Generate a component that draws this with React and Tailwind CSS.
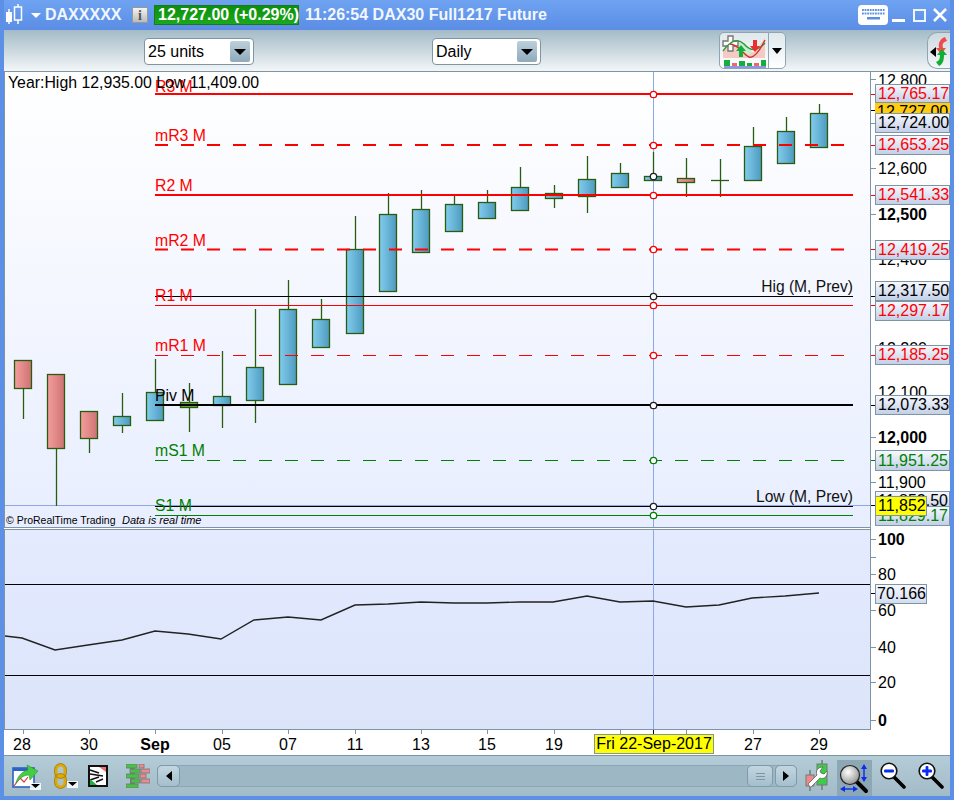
import React from "react";

// [x, bodyTop, bodyBottom, wickTop, wickBottom, colour]
const candles = [
  [23, 360, 388, 360, 419, "r"],
  [56, 374, 448, 374, 506, "r"],
  [89, 411, 438, 411, 453, "r"],
  [122, 416, 425, 393, 433, "b"],
  [155, 392, 420, 359, 420, "b"],
  [189, 402, 407, 383, 432, "g"],
  [222, 396, 405, 351, 428, "b"],
  [255, 367, 400, 309, 423, "b"],
  [288, 309, 384, 280, 384, "b"],
  [321, 319, 347, 299, 347, "b"],
  [355, 249, 333, 216, 333, "b"],
  [388, 214, 291, 193, 291, "b"],
  [421, 209, 252, 190, 252, "b"],
  [454, 204, 231, 196, 231, "b"],
  [487, 202, 218, 190, 218, "b"],
  [520, 187, 210, 167, 210, "b"],
  [554, 193, 198, 185, 208, "b"],
  [587, 179, 196, 156, 213, "b"],
  [620, 173, 187, 163, 187, "b"],
  [653, 176, 180, 152, 180, "b"],
  [686, 178, 182, 158, 197, "r"],
  [720, 180, 180, 159, 197, "d"],
  [753, 146, 180, 127, 180, "b"],
  [786, 131, 163, 117, 163, "b"],
  [819, 113, 147, 104, 147, "b"],
];

const levels = [
  { label: "R3 M", y: 94, color: "#ff0000", w: 2, labelY: 92 },
  { label: "mR3 M", y: 145, color: "#ff0000", w: 2, dash: true, labelY: 141 },
  { label: "R2 M", y: 195, color: "#ff0000", w: 2, labelY: 191 },
  { label: "mR2 M", y: 249.5, color: "#ff0000", w: 2, dash: true, labelY: 246 },
  { label: "R1 M", y: 305.5, color: "#ff0000", w: 1, labelY: 301 },
  { label: "mR1 M", y: 355.5, color: "#ff0000", w: 1, dash: true, labelY: 351 },
  { label: "Piv M", y: 405, color: "#000000", w: 2, labelY: 401 },
  { label: "mS1 M", y: 460.5, color: "#008000", w: 1, dash: true, labelY: 456 },
  { label: "S1 M", y: 515.5, color: "#008000", w: 1, labelY: 511 },
];

const dots = [
  [94, "#ff0000"],
  [145, "#ff0000"],
  [176, "#222222"],
  [195, "#ff0000"],
  [249, "#ff0000"],
  [296, "#222222"],
  [305, "#ff0000"],
  [355, "#ff0000"],
  [405, "#222222"],
  [460, "#008000"],
  [506, "#222222"],
  [515, "#008000"],
];

const oscillator =
  "5,636 22,638 55,650 88,645 122,640 155,631 188,634 221,639 254,620 288,617 321,620 355,605 388,604 421,602 454,603 487,603 520,602 553,602 587,596 620,602 653,601 686,607 719,605 752,598 785,596 819,593";

// axis text, y is the page centre of the label
const axisTicks = [
  { t: "12,800", y: 81 },
  { t: "12,600", y: 169 },
  { t: "12,500", y: 215, bold: true },
  { t: "12,400", y: 260 },
  { t: "12,200", y: 349 },
  { t: "12,100", y: 393 },
  { t: "12,000", y: 438, bold: true },
  { t: "11,900", y: 483 },
  { t: "100", y: 540, bold: true },
  { t: "80", y: 575 },
  { t: "60", y: 611 },
  { t: "40", y: 648 },
  { t: "20", y: 683 },
  { t: "0", y: 721, bold: true },
];

const tickMarks = [
  [79, "#7d95a5"], [94, "#ff0000"], [110, "#000000"], [123, "#7d95a5"], [145, "#ff0000"], [168, "#7d95a5"],
  [195, "#ff0000"], [214, "#7d95a5"], [249, "#ff0000"], [259, "#7d95a5"], [296, "#000000"], [305, "#ff0000"],
  [355, "#ff0000"], [405, "#000000"], [437, "#7d95a5"], [460, "#008000"], [482, "#7d95a5"], [505, "#000000"],
  [539, "#7d95a5"], [557, "#7d95a5"], [574, "#7d95a5"], [593, "#000000"], [610, "#7d95a5"], [647, "#7d95a5"],
  [682, "#7d95a5"], [720, "#7d95a5"],
];

const axisBoxes = [
  { t: "12,727.00", top: 102, h: 19, color: "text-black", bg: "bg-[#ffcc11]", border: false },
  { t: "12,765.17", top: 84, h: 19, color: "text-[#ff0000]" },
  { t: "12,724.00", top: 113, h: 20, color: "text-black" },
  { t: "12,653.25", top: 135, h: 20, color: "text-[#ff0000]" },
  { t: "12,541.33", top: 185, h: 20, color: "text-[#ff0000]" },
  { t: "12,419.25", top: 240, h: 20, color: "text-[#ff0000]" },
  { t: "12,317.50", top: 281, h: 20, color: "text-black" },
  { t: "12,297.17", top: 301, h: 20, color: "text-[#ff0000]" },
  { t: "12,185.25", top: 345, h: 20, color: "text-[#ff0000]" },
  { t: "12,073.33", top: 395, h: 20, color: "text-black" },
  { t: "11,951.25", top: 450, h: 21, color: "text-[#008000]" },
  { t: "11,852.50", top: 491, h: 20, color: "text-black" },
  { t: "11,829.17", top: 506, h: 20, color: "text-[#008000]" },
];

const dateLabels = [
  ["28", 22], ["30", 89], ["Sep", 155, true], ["05", 222], ["07", 288], ["11", 355], ["13", 421],
  ["15", 487], ["19", 554], ["27", 753], ["29", 819],
];
const dateTicks = [23, 89, 155, 222, 288, 355, 421, 487, 554, 620, 653, 686, 753, 819];

const Candle = ({ c }) => {
  const [x, top, bottom, wickTop, wickBottom, kind] = c;
  const fill = kind === "r" ? "url(#redBody)" : kind === "g" ? "#6fae4a" : "url(#blueBody)";
  return (
    <g stroke="#2a5c10" strokeWidth="1.3">
      <line x1={x + 0.5} x2={x + 0.5} y1={wickTop} y2={wickBottom} />
      {kind === "d" ? (
        <line x1={x - 9} x2={x + 9} y1={top + 0.5} y2={top + 0.5} />
      ) : (
        <rect x={x - 8.5} y={top + 0.5} width="17" height={bottom - top} fill={fill} />
      )}
    </g>
  );
};

const PriceChart = () => (
  <svg viewBox="5 72 865 455" className="block w-[865px] h-[455px]">
    <defs>
      <linearGradient id="blueBody" x1="0" x2="1" y1="0" y2="0">
        <stop offset="0" stopColor="#82cdee" />
        <stop offset="1" stopColor="#4e9abf" />
      </linearGradient>
      <linearGradient id="redBody" x1="0" x2="1" y1="0" y2="0">
        <stop offset="0" stopColor="#f59e9e" />
        <stop offset="1" stopColor="#cd7272" />
      </linearGradient>
    </defs>
    <line x1="5" x2="870" y1="505.5" y2="505.5" stroke="#8ba8e8" />
    <line x1="653.5" x2="653.5" y1="72" y2="527" stroke="#8ba8e8" />
    {candles.map((c) => (
      <Candle key={c[0]} c={c} />
    ))}
    <line x1="155" x2="853" y1="296.5" y2="296.5" stroke="#000" />
    <line x1="155" x2="853" y1="506.5" y2="506.5" stroke="#000" />
    {levels.map((l) => (
      <g key={l.label}>
        <line
          x1="155"
          x2="853"
          y1={l.y}
          y2={l.y}
          stroke={l.color}
          strokeWidth={l.w}
          strokeDasharray={l.dash ? "13 13" : undefined}
        />
        <text x="155" y={l.labelY} fontSize="15.8" fill={l.color} fontFamily="Liberation Sans, sans-serif">
          {l.label}
        </text>
      </g>
    ))}
    {dots.map(([y, color]) => (
      <circle key={y} cx="653.5" cy={y + 0.5} r="3.2" fill="#fff" stroke={color} strokeWidth="1.3" />
    ))}
    <text x="8" y="88" fontSize="15.85" fill="#000" fontFamily="Liberation Sans, sans-serif">
      Year:High 12,935.00 Low 11,409.00
    </text>
    <text x="853" y="292" textAnchor="end" fontSize="15.6" fill="#111" fontFamily="Liberation Sans, sans-serif">
      Hig (M, Prev)
    </text>
    <text x="853" y="502" textAnchor="end" fontSize="15.6" fill="#111" fontFamily="Liberation Sans, sans-serif">
      Low (M, Prev)
    </text>
    <text x="6" y="524" fontSize="10.5" fill="#000" fontFamily="Liberation Sans, sans-serif">
      © ProRealTime Trading
    </text>
    <text x="122" y="524" fontSize="11" fontStyle="italic" fill="#000" fontFamily="Liberation Sans, sans-serif">
      Data is real time
    </text>
  </svg>
);

const OscillatorChart = () => (
  <svg viewBox="5 530 865 199" className="block w-[865px] h-[199px]">
    <line x1="5" x2="870" y1="584.5" y2="584.5" stroke="#000" />
    <line x1="5" x2="870" y1="675.5" y2="675.5" stroke="#000" />
    <line x1="653.5" x2="653.5" y1="530" y2="729" stroke="#8ba8e8" />
    <polyline points={oscillator} fill="none" stroke="#222" strokeWidth="1.4" />
  </svg>
);

const Select = ({ label, className }) => (
  <div
    className={`flex items-center justify-between h-[27px] rounded-[4px] border border-[#7d95a5] bg-white pl-[3px] pr-[3px] text-[16px] text-black ${className}`}
  >
    <span>{label}</span>
    <span className="flex h-[21px] w-[20px] items-center justify-center rounded-[2px] bg-linear-to-b from-[#bcd0dc] to-[#8faabb]">
      <span className="h-0 w-0 border-x-[6px] border-t-[6px] border-x-transparent border-t-black" />
    </span>
  </div>
);

const CandleGlyph = () => (
  <svg width="22" height="22" viewBox="0 0 22 22" className="block">
    <g fill="none" stroke="#fff" strokeWidth="1.5">
      <rect x="11.5" y="3" width="7" height="13" />
      <line x1="15" x2="15" y1="0" y2="3" />
      <line x1="15" x2="15" y1="16" y2="20" />
      <line x1="6" x2="6" y1="5" y2="20" />
    </g>
    <rect x="3" y="8" width="6" height="10" fill="#fff" />
  </svg>
);

const KeyboardIcon = () => (
  <svg width="30" height="20" viewBox="0 0 30 20" className="block">
    <rect width="30" height="20" rx="4" fill="#fff" />
    <g fill="#5d8fe0">
      {[0, 1, 2, 3, 4, 5, 6, 7, 8].map((i) => (
        <rect key={i} x={4 + i * 2.6} y="4" width="1.8" height="2" />
      ))}
      {[0, 1, 2, 3, 4, 5, 6, 7, 8].map((i) => (
        <rect key={i} x={4 + i * 2.6} y="7.5" width="1.8" height="2" />
      ))}
      <rect x="9" y="12" width="13" height="2.5" />
    </g>
  </svg>
);

const IndicatorIcon = () => (
  <svg width="46" height="34" viewBox="0 0 46 34" className="block">
    <path d="M2 16 C8 8 14 4 20 10 C25 16 30 22 35 16 L44 4 L44 24 L2 24Z" fill="#f5c9c4" />
    <path d="M17 11 C22 6 28 12 31 18 C26 24 21 20 17 11Z" fill="#cdeccc" />
    <path d="M7 2h5v5h5v5h-5v5H7v-5H2V7h5z" fill="#fff" stroke="#777" strokeWidth="1.4" />
    <path d="M2 17 C10 6 17 4 23 10 C29 17 36 18 44 9" fill="none" stroke="#2d9a3a" strokeWidth="1.4" />
    <path d="M9 10 C17 10 22 20 28 23 C34 25 40 14 44 6" fill="none" stroke="#c9342c" strokeWidth="1.4" />
    <path d="M18 23v-6h-3l5-6 5 6h-3v6z" fill="#12b03a" />
    <path d="M32 6h4v6h3l-5 6-5-6h3z" fill="#ee2e2e" />
    <g>
      <rect x="3" y="26" width="6" height="6" fill="#12b03a" />
      <rect x="11" y="29" width="5" height="3" fill="#e96a6a" />
      <rect x="18" y="27" width="6" height="5" fill="#12b03a" />
      <rect x="26" y="29" width="5" height="3" fill="#12b03a" />
      <rect x="33" y="29" width="5" height="3" fill="#e96a6a" />
      <rect x="40" y="26" width="5" height="6" fill="#12b03a" />
    </g>
    <line x1="3" x2="45" y1="33" y2="33" stroke="#2b2bd0" strokeWidth="1" />
  </svg>
);

const SideTab = () => (
  <div className="flex h-[37px] w-[23px] items-center justify-center rounded-l-[10px] border border-r-0 border-[#8fa5b3] bg-linear-to-b from-[#ccd9e0] to-[#f5f7f8]">
    <svg width="22" height="34" viewBox="0 0 22 34" className="block">
      <path d="M8 13 L2 18 L8 23z" fill="#000" />
      <path d="M17 3 C12 5 10 9 11 14 L8 14 L13 20 L18 14 L15 14 C14 10 15 8 19 7z" fill="#ef4b4b" />
      <path d="M11 32 C15 30 16 26 16 21 L19 21 L14 15 L9 21 L12 21 C12 25 11 27 8 28z" fill="#10b030" />
    </svg>
  </div>
);

const ExportIcon = () => (
  <svg width="30" height="28" viewBox="0 0 30 28" className="block">
    <rect x="2" y="6" width="21" height="19" fill="#fff" stroke="#2a62c8" strokeWidth="1.6" />
    <rect x="2" y="6" width="21" height="3" fill="#2a62c8" />
    <path d="M3 24 L9 16 L13 20 L17 15" fill="none" stroke="#e23a3a" strokeWidth="1.2" />
    <path d="M5 21 C7 13 12 9 17 8 L16 3 L27 9 L19 18 L18 13 C13 13 9 16 5 21z" fill="#44cc44" stroke="#2a9a2a" strokeWidth="0.6" />
    <rect x="19" y="21" width="11" height="7" fill="#fff" opacity="0.85" />
    <path d="M20 22 L29 22 L24.5 26z" fill="#000" />
  </svg>
);

const ChainIcon = () => (
  <svg width="24" height="26" viewBox="0 0 24 26" className="block">
    <g fill="none" stroke="#dfa800" strokeWidth="3">
      <rect x="2" y="2" width="9" height="12" rx="4.5" />
      <rect x="2" y="12" width="9" height="12" rx="4.5" />
    </g>
    <g fill="none" stroke="#8a6a00" strokeWidth="0.6">
      <rect x="0.5" y="0.5" width="12" height="15" rx="6" />
      <rect x="0.5" y="10.5" width="12" height="15" rx="6" />
    </g>
    <rect x="13" y="18" width="11" height="7" fill="#fff" opacity="0.85" />
    <path d="M14 19 L23 19 L18.5 23z" fill="#000" />
  </svg>
);

const ListIcon = () => (
  <svg width="20" height="22" viewBox="0 0 20 22" className="block">
    <rect width="20" height="22" fill="#111" />
    <rect x="2" y="2" width="16" height="18" fill="#fff" />
    <g stroke="#111" strokeWidth="1.4">
      <line x1="2" x2="11" y1="5" y2="8" />
      <line x1="2" x2="15" y1="9" y2="11" />
      <line x1="11" x2="2" y1="12" y2="15" />
      <line x1="15" x2="8" y1="14" y2="17" />
    </g>
    <path d="M11 2 L18 2 L18 7z" fill="#e47474" />
    <path d="M2 20 L2 14 L9 20z" fill="#22b044" />
  </svg>
);

const BricksIcon = () => {
  const bricks = [
    [0, 0, 11, "#44c444"], [13, 0, 5, "#ec8a8a"], [4, 5, 10, "#44c444"], [15, 5, 9, "#ec8a8a"],
    [0, 10, 13, "#44c444"], [14, 10, 6, "#ec8a8a"], [5, 15, 9, "#44c444"], [15, 15, 9, "#ec8a8a"], [0, 20, 12, "#44c444"],
  ];
  return (
    <svg width="24" height="24" viewBox="0 0 24 24" className="block">
      <rect x="4" y="0" width="5" height="24" fill="#777" />
      {bricks.map(([x, y, w, color]) => (
        <rect key={`${x}-${y}`} x={x} y={y} width={w} height="4" fill={color} stroke="#777" strokeWidth="0.8" />
      ))}
    </svg>
  );
};

const ToolsIcon = () => (
  <svg width="24" height="32" viewBox="0 0 24 32" className="block">
    <line x1="5" x2="5" y1="10" y2="31" stroke="#777" strokeWidth="1.5" />
    <rect x="1" y="15" width="8" height="11" fill="#ec8a8a" stroke="#777" />
    <line x1="17" x2="17" y1="0" y2="30" stroke="#777" strokeWidth="1.5" />
    <rect x="12" y="4" width="10" height="21" fill="#3fcb4a" stroke="#777" />
    <path
      d="M5 27 L3 24 L12 15 C10 11 13 7 18 7 L15 11 L16 13 L19 14 L22 11 C23 16 19 20 15 18 L6 27z"
      fill="#fff"
      stroke="#555"
      strokeWidth="0.7"
    />
  </svg>
);

const PanIcon = () => (
  <svg width="32" height="32" viewBox="0 0 32 32" className="block">
    <defs>
      <radialGradient id="lens" cx="0.4" cy="0.35" r="0.7">
        <stop offset="0" stopColor="#fff" />
        <stop offset="1" stopColor="#8f8f8f" />
      </radialGradient>
    </defs>
    <line x1="16" x2="27" y1="18" y2="29" stroke="#000" strokeWidth="4" strokeLinecap="round" />
    <circle cx="11" cy="13" r="9.5" fill="url(#lens)" stroke="#222" strokeWidth="1.2" />
    <g stroke="#0a2cf0" strokeWidth="1.4" fill="#0a2cf0">
      <line x1="25" x2="25" y1="4" y2="18" />
      <path d="M25 2 L22 7 L28 7z" strokeWidth="0" />
      <path d="M25 20 L22 15 L28 15z" strokeWidth="0" />
      <line x1="4" x2="16" y1="27" y2="27" />
      <path d="M1 27 L6 24 L6 30z" strokeWidth="0" />
      <path d="M19 27 L14 24 L14 30z" strokeWidth="0" />
    </g>
  </svg>
);

const ZoomIcon = ({ plus }) => (
  <svg width="26" height="28" viewBox="0 0 26 28" className="block">
    <line x1="14" x2="24" y1="15" y2="25" stroke="#000" strokeWidth="3.6" strokeLinecap="round" />
    <circle cx="9" cy="9" r="7.8" fill="#fff" stroke="#111" strokeWidth="1.6" />
    <rect x="4" y="7.6" width="10" height="2.8" rx="1" fill="#0a2cf0" />
    {plus && <rect x="7.6" y="4" width="2.8" height="10" rx="1" fill="#0a2cf0" />}
  </svg>
);

const ScrollButton = ({ children, className }) => (
  <div
    className={`flex h-[22px] items-center justify-center rounded-[5px] border border-[#7f9bab] bg-linear-to-b from-[#c2d6e0] to-[#a5bfcc] ${className}`}
  >
    {children}
  </div>
);

const App = () => {
  return (
    <div className="flex h-[800px] w-[954px] flex-col overflow-hidden border-x-4 border-b-4 border-[#5c8fe6] bg-white font-['Liberation_Sans',Arial,sans-serif]">
      {/* title bar */}
      <div className="flex h-[30px] shrink-0 items-center bg-linear-to-b from-[#6fa3f2] to-[#5a8de4] text-[16px] font-bold text-[#f2f6ff]">
        <div className="ml-[-1px] mr-[6px]">
          <CandleGlyph />
        </div>
        <span className="mr-[4px] h-0 w-0 border-x-[5px] border-t-[5px] border-x-transparent border-t-white" />
        <span className="w-[87px]">DAXXXXX</span>
        <span className="mr-[6px] flex h-[16px] w-[16px] items-center justify-center border border-[#999] bg-linear-to-b from-[#f4f4f4] to-[#bbb] font-['Liberation_Serif',serif] text-[14px] text-[#555]">
          i
        </span>
        <span className="flex h-[20px] w-[145px] items-center whitespace-nowrap border border-[#1a7a1a] bg-linear-to-b from-[#0c8f0c] to-[#1ca81c] pl-[3px] text-white">
          12,727.00 (+0.29%)
        </span>
        <span className="ml-[6px]">11:26:54 DAX30 Full1217 Future</span>
        <div className="ml-auto flex items-center">
          <KeyboardIcon />
          <span className="ml-[4px] mt-[11px] h-[3px] w-[13px] bg-white" />
          <span className="ml-[8px] h-[13px] w-[13px] border-2 border-white/90" />
          <svg width="14" height="14" viewBox="0 0 14 14" className="ml-[7px] mr-[3px] block">
            <path d="M1 1 L13 13 M13 1 L1 13" stroke="#fff" strokeWidth="2.6" />
          </svg>
        </div>
      </div>

      {/* toolbar */}
      <div className="relative flex h-[42px] shrink-0 items-start border-b border-[#7d95a5] bg-linear-to-b from-[#a3bbc7] to-[#f3f6f7]">
        <Select label="25 units" className="ml-[140px] mt-[8px] w-[110px]" />
        <Select label="Daily" className="ml-[178px] mt-[8px] w-[109px]" />
        <div className="ml-[178px] mt-[2px] flex h-[37px] w-[67px] overflow-hidden rounded-[5px] border border-[#8fa5b3] bg-linear-to-b from-[#dfe8ec] to-white">
          <div className="flex w-[49px] items-center justify-center border-r border-[#8fa5b3]">
            <IndicatorIcon />
          </div>
          <div className="flex flex-1 items-center justify-center">
            <span className="h-0 w-0 border-x-[5px] border-t-[6px] border-x-transparent border-t-black" />
          </div>
        </div>
        <div className="ml-auto mt-[2px]">
          <SideTab />
        </div>
      </div>

      {/* plots and price axis */}
      <div className="flex h-[658px] shrink-0">
        <div className="flex w-[867px] shrink-0 flex-col border-r border-[#7d95a5]">
          <div className="h-[456px] border-b border-l border-[#7d95a5] bg-linear-to-b from-white to-[#e8eeff]">
            <PriceChart />
          </div>
          <div className="h-[1px] bg-white" />
          <div className="h-[201px] border-y border-l border-[#7d95a5] bg-linear-to-b from-[#e4ebff] to-[#dce4fa]">
            <OscillatorChart />
          </div>
        </div>
        <div className="relative flex-1 text-[16px] text-black">
          {tickMarks.map(([y, color]) => (
            <span key={y} className="absolute left-0 h-[1px] w-[5px]" style={{ top: y - 72, backgroundColor: color }} />
          ))}
          {axisTicks.map((a) => (
            <span
              key={a.t}
              className={`absolute left-[7px] leading-[18px] ${a.bold ? "font-bold" : ""}`}
              style={{ top: a.y - 72 - 9 }}
            >
              {a.t}
            </span>
          ))}
          {axisBoxes.map((b) => (
            <span
              key={b.t}
              className={`absolute left-[4px] flex w-[75px] items-center pl-[2px] ${b.color} ${
                b.bg ? b.bg : "border border-[#7d95a5] bg-linear-to-b from-[#f6f8ff] to-[#c3d0e8]"
              }`}
              style={{ top: b.top - 72, height: b.h }}
            >
              {b.t}
            </span>
          ))}
          <span
            className="absolute left-[4px] flex h-[20px] w-[52px] items-center border border-[#7d95a5] bg-[#ffff00] pl-[2px]"
            style={{ top: 496 - 72 }}
          >
            11,852
          </span>
          <span
            className="absolute left-[4px] flex h-[20px] w-[52px] items-center border border-[#7d95a5] bg-linear-to-b from-[#f6f8ff] to-[#d3ddf0] pl-[1px]"
            style={{ top: 584 - 72 }}
          >
            70.166
          </span>
        </div>
      </div>

      {/* date axis */}
      <div className="relative h-[25px] shrink-0 bg-white text-[16px] text-black">
        {dateTicks.map((x) => (
          <span
            key={x}
            className={`absolute top-0 h-[4px] w-[1px] ${x === 653 ? "bg-black" : "bg-[#7d95a5]"}`}
            style={{ left: x - 4 }}
          />
        ))}
        {dateLabels.map(([t, x, bold]) => (
          <span
            key={t}
            className={`absolute top-[6px] w-[40px] text-center leading-[18px] ${bold ? "font-bold" : ""}`}
            style={{ left: x - 4 - 20 }}
          >
            {t}
          </span>
        ))}
        <span
          className="absolute top-[4px] flex h-[20px] w-[120px] items-center justify-center border border-[#7d95a5] bg-[#ffff00]"
          style={{ left: 594 - 4 }}
        >
          Fri 22-Sep-2017
        </span>
      </div>

      {/* bottom bar */}
      <div className="flex h-[41px] shrink-0 items-center border-t border-[#7d95a5] bg-linear-to-b from-[#b4ccd7] to-[#a2bbc8]">
        <div className="ml-[7px]">
          <ExportIcon />
        </div>
        <div className="ml-[13px]">
          <ChainIcon />
        </div>
        <div className="ml-[10px]">
          <ListIcon />
        </div>
        <div className="ml-[18px]">
          <BricksIcon />
        </div>
        <div className="ml-[7px] flex h-[22px] w-[640px] items-center rounded-[5px] border border-[#8ca6b5] bg-[#9db7c5]">
          <ScrollButton className="ml-[-1px] w-[23px]">
            <span className="h-0 w-0 border-y-[5px] border-r-[6px] border-y-transparent border-r-black" />
          </ScrollButton>
          <ScrollButton className="ml-auto mr-[2px] w-[26px]">
            <span className="h-[7px] w-[9px] border-y border-[#7f95a3] bg-[linear-gradient(#7f95a3,#7f95a3)] bg-[length:100%_1px] bg-center bg-no-repeat" />
          </ScrollButton>
          <ScrollButton className="mr-[-1px] w-[22px]">
            <span className="h-0 w-0 border-y-[5px] border-l-[6px] border-y-transparent border-l-black" />
          </ScrollButton>
        </div>
        <div className="ml-[8px]">
          <ToolsIcon />
        </div>
        <div className="ml-[8px] flex h-[36px] w-[35px] items-center justify-center self-end bg-[#8ea7b5]">
          <PanIcon />
        </div>
        <div className="ml-[8px]">
          <ZoomIcon />
        </div>
        <div className="ml-[12px]">
          <ZoomIcon plus />
        </div>
      </div>
    </div>
  );
};

export default App;
